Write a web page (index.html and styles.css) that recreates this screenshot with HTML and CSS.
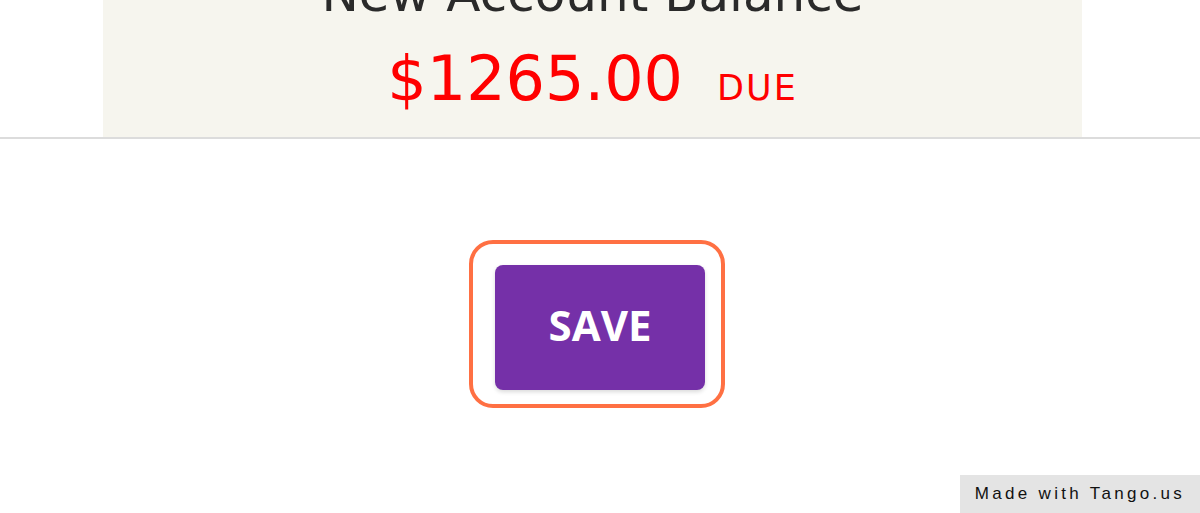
FILE: index.html
```html
<!DOCTYPE html>
<html>
<head>
<meta charset="utf-8">
<link rel="stylesheet" href="styles.css">
</head>
<body>
<div class="panel">
  <h2 class="title">New Account Balance</h2>
  <div class="balance"><span class="amount">$1265.00</span><span class="due">DUE</span></div>
</div>
<div class="divider"></div>
<div class="actions">
  <div class="highlight">
    <button class="save">SAVE</button>
  </div>
</div>
<div class="tango">Made with Tango.us</div>
</body>
</html>
```
FILE: styles.css
```css
html, body { margin: 0; padding: 0; background: #fff; }
body { width: 1200px; height: 513px; overflow: hidden; position: relative; font-family: "DejaVu Sans", sans-serif; }
.panel {
  margin: 0 118px 0 103px;
  height: 137px;
  background: #f6f5ee;
  display: flex;
  flex-direction: column;
  align-items: center;
}
.title {
  margin: -36px 0 0 0;
  font-weight: 400;
  font-size: 50px;
  line-height: 60px;
  color: #2a2a2a;
}
.balance {
  display: flex;
  align-items: baseline;
  margin-top: 15px;
  color: #ff0000;
}
.amount { font-size: 62px; line-height: 80px; }
.due { font-size: 35px; margin-left: 34px; letter-spacing: 2px; }
.divider { height: 2px; background: #dcdcdc; }
.actions { display: flex; justify-content: center; padding-top: 126px; }
.highlight { position: relative; }
.highlight::before {
  content: "";
  position: absolute;
  left: -26px; right: -20px; top: -25px; bottom: -18px;
  border: 4px solid #ff7043;
  border-radius: 24px;
}
.save {
  display: block;
  width: 210px;
  height: 125px;
  border: 0;
  border-radius: 8px;
  background: #7530a8;
  color: #fff;
  font-family: "Open Sans", sans-serif;
  font-weight: 700;
  font-size: 42px;
  padding: 0 0 6px 0;
  box-shadow: 0 2px 4px rgba(0,0,0,0.15);
}
.tango {
  position: absolute;
  right: 0; bottom: 0;
  width: 240px; height: 38px;
  background: #e4e4e4;
  font-family: "Liberation Sans", sans-serif;
  font-size: 17px;
  letter-spacing: 3.3px;
  color: #111;
  display: flex; align-items: center; justify-content: center;
}
```
